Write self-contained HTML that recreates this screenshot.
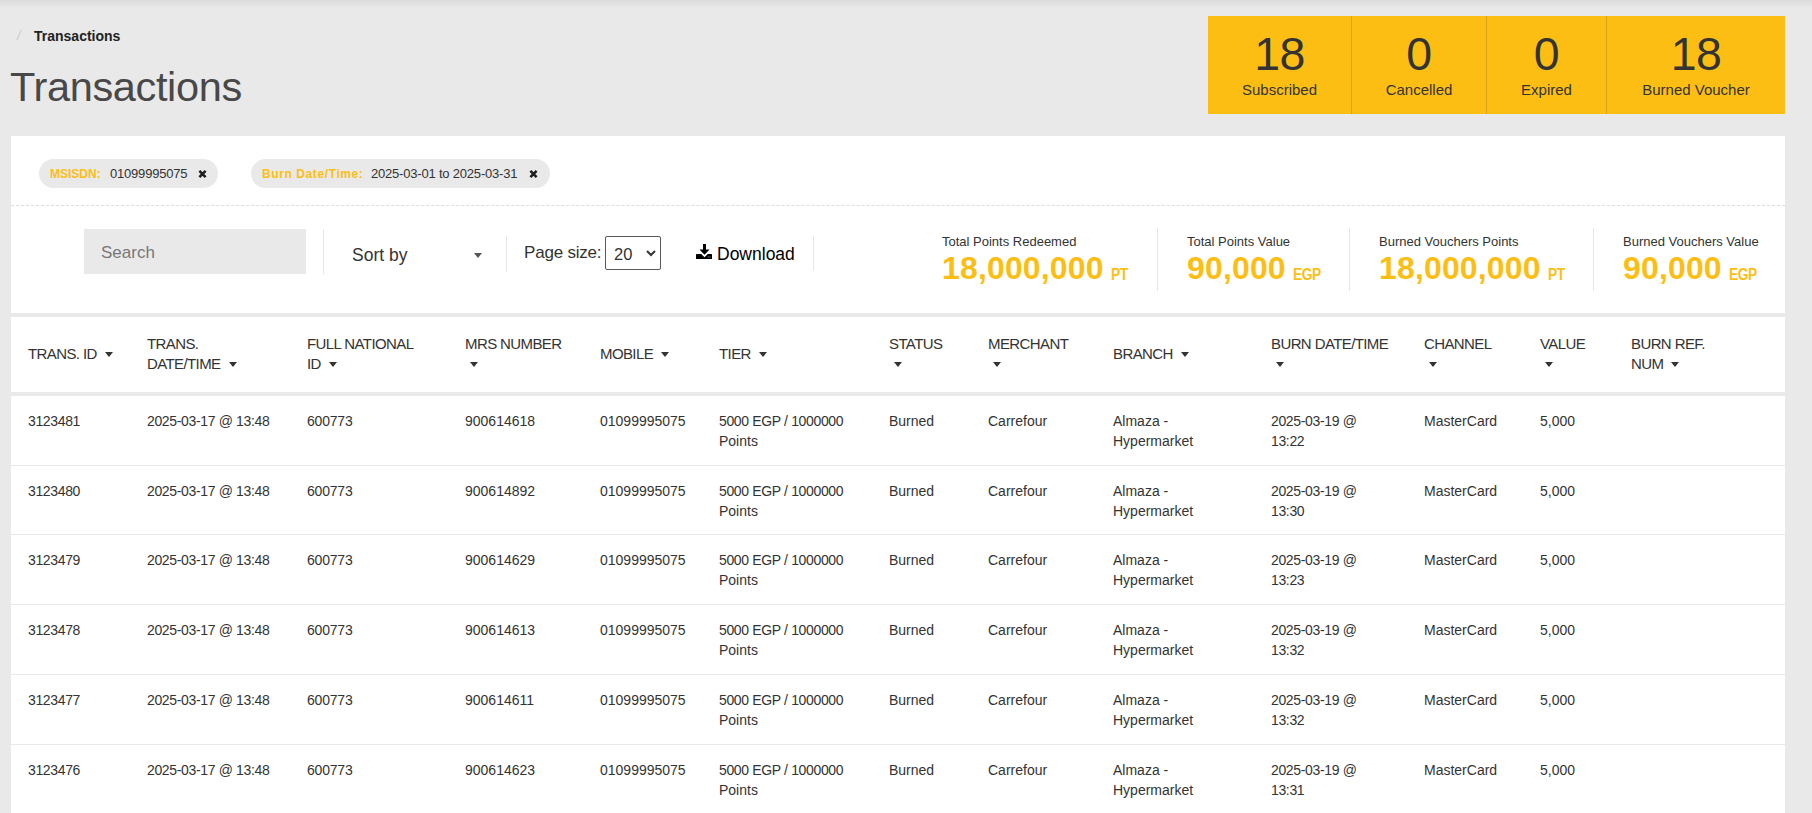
<!DOCTYPE html>
<html><head><meta charset="utf-8">
<style>
*{box-sizing:border-box;margin:0;padding:0}
html,body{width:1812px;height:813px;overflow:hidden;background:#e9e9e9;font-family:"Liberation Sans",sans-serif;color:#333;position:relative}
.abs{position:absolute;white-space:nowrap}
#shadow{position:absolute;left:0;top:0;width:1812px;height:8px;background:linear-gradient(#dbdbdb,#e9e9e9)}
.bc-sep{left:15px;top:27px;font-size:15px;color:#cfcfcf}
.bc{left:34px;top:27.5px;font-size:14px;font-weight:bold;color:#222}
h1{position:absolute;left:10px;top:62.5px;font-size:41.5px;letter-spacing:-0.35px;font-weight:normal;color:#484848;white-space:nowrap}
#stats{position:absolute;left:1208px;top:16px;width:577px;height:98px;background:#fdbe13}
#stats .c{position:absolute;top:0;height:98px;text-align:center;color:#333}
#stats .c .n{position:absolute;left:0;right:0;top:14.7px;font-size:46.5px;line-height:1;letter-spacing:-0.5px}
#stats .c .l{position:absolute;left:0;right:0;top:66px;font-size:15px;line-height:1}
#stats .d{position:absolute;top:0;width:1px;height:98px;background:#d9a514}
#panel{position:absolute;left:11px;top:136px;width:1774px;height:177px;background:#fff}
.chip{position:absolute;top:23px;height:29px;border-radius:15px;background:#e9e9e9}
.chip .k{position:absolute;top:8px;font-size:12px;font-weight:bold;color:#fdbe13;white-space:nowrap}
.chip .v{position:absolute;top:7px;font-size:13px;color:#333;white-space:nowrap}
.chip svg{position:absolute;top:11px}
#dash{position:absolute;left:0;top:69px;width:1774px;height:0;border-top:1px dashed #ddd}
#search{position:absolute;left:73px;top:93px;width:222px;height:45px;background:#e9e9e9}
#search span{position:absolute;left:17px;top:13.7px;font-size:17px;color:#777}
.vd{position:absolute;width:1px;background:#e6e6e6}
.tb{position:absolute;white-space:nowrap;font-size:17.5px;color:#333}
#sel{position:absolute;left:594px;top:100px;width:56px;height:34px;border:1px solid #5a5a5a;border-radius:2px}
.st{position:absolute;white-space:nowrap}
.st .lb{font-size:13px;color:#333;position:absolute;top:0;left:0;white-space:nowrap}
.st .vl{font-size:32px;font-weight:bold;color:#fdbe13;position:absolute;left:0;top:16px;letter-spacing:0.15px;white-space:nowrap}
.st .vl small{font-size:16px;margin-left:7px;letter-spacing:-0.5px;display:inline-block;transform:scaleX(0.86);transform-origin:0 0;position:relative;top:1px}
#thead{position:absolute;left:11px;top:317px;width:1774px;height:75px;background:#fff}
.row{position:absolute;left:11px;width:1774px;height:70px;background:#fff}
.hl{position:absolute;left:11px;width:1774px;height:1px;background:#e9e9e9}
.th{position:absolute;font-size:15px;letter-spacing:-0.6px;line-height:20px;color:#333;white-space:nowrap}
.td{position:absolute;top:15px;font-size:14px;line-height:20px;color:#333;white-space:nowrap}
.caret{display:inline-block;width:0;height:0;border-left:4.5px solid transparent;border-right:4.5px solid transparent;border-top:5px solid #333;vertical-align:middle;margin-left:8px;position:relative;top:-1px}
.caret.c0{margin-left:5px}
.ls{letter-spacing:-0.35px}
.ls2{letter-spacing:-0.2px}

</style></head><body>
<div id="shadow"></div>
<svg style="position:absolute;left:15px;top:29px" width="8" height="12" viewBox="0 0 8 12"><path d="M6.3 0.8L1.7 11.2" stroke="#d0d0d0" stroke-width="1.3"/></svg>
<div class="abs bc">Transactions</div>
<h1>Transactions</h1>

<div id="stats">
  <div class="c" style="left:0;width:143px"><div class="n">18</div><div class="l">Subscribed</div></div>
  <div class="d" style="left:143px"></div>
  <div class="c" style="left:144px;width:134px"><div class="n">0</div><div class="l">Cancelled</div></div>
  <div class="d" style="left:278px"></div>
  <div class="c" style="left:279px;width:119px"><div class="n">0</div><div class="l">Expired</div></div>
  <div class="d" style="left:398px"></div>
  <div class="c" style="left:399px;width:178px"><div class="n">18</div><div class="l">Burned Voucher</div></div>
</div>

<div id="panel">
  <div class="chip" style="left:28px;width:179px">
    <span class="k" style="left:11px">MSISDN:</span><span class="v" style="left:71px;letter-spacing:-0.2px">01099995075</span>
    <svg style="left:159px" width="9" height="8" viewBox="0 0 9 8"><path d="M1.4 0.9L7.6 7.1M7.6 0.9L1.4 7.1" stroke="#1e1e1e" stroke-width="2.6"/></svg>
  </div>
  <div class="chip" style="left:240px;width:299px">
    <span class="k" style="left:11px;letter-spacing:0.6px">Burn Date/Time:</span><span class="v" style="left:120px;letter-spacing:-0.2px">2025-03-01 to 2025-03-31</span>
    <svg style="left:278px" width="9" height="8" viewBox="0 0 9 8"><path d="M1.4 0.9L7.6 7.1M7.6 0.9L1.4 7.1" stroke="#1e1e1e" stroke-width="2.6"/></svg>
  </div>
  <div id="dash"></div>
  <div id="search"><span>Search</span></div>
  <div class="vd" style="left:312px;top:93px;height:45px"></div>
  <div class="tb" style="left:341px;top:108.8px">Sort by</div>
  <i class="caret" style="position:absolute;left:463px;top:117px;margin:0;border-top-color:#555;border-left-width:4px;border-right-width:4px"></i>
  <div class="vd" style="left:495px;top:100px;height:36px"></div>
  <div class="tb" style="left:513px;top:107px;font-size:17px;letter-spacing:-0.2px">Page size:</div>
  <div id="sel"><span style="position:absolute;left:8px;top:7.5px;font-size:16.5px;color:#333">20</span>
    <svg style="position:absolute;left:40px;top:13px" width="10" height="7" viewBox="0 0 10 7"><path d="M1 1L5 5L9 1" fill="none" stroke="#333" stroke-width="2"/></svg>
  </div>
  <svg style="position:absolute;left:685px;top:108px" width="16" height="15" viewBox="0 0 16 15"><path d="M7 0h3v5.5h3.5l-5 5.3l-5-5.3h3.5z" fill="#000"/><path d="M0.6 10h4.6l3.3 3.2l3.3-3.2h3.6a0.6 0.6 0 0 1 .6.6v3.8a0.6 0.6 0 0 1 -.6.6h-14.8a0.6 0.6 0 0 1 -.6-.6v-3.8a0.6 0.6 0 0 1 .6-.6z" fill="#000"/><circle cx="12.2" cy="12.9" r="0.55" fill="#888"/><circle cx="14" cy="12.9" r="0.55" fill="#888"/></svg>
  <div class="tb" style="left:706px;top:107.6px;color:#000">Download</div>
  <div class="vd" style="left:802px;top:100px;height:35px"></div>

  <div class="st" style="left:931px;top:98px"><span class="lb">Total Points Redeemed</span><span class="vl">18,000,000<small>PT</small></span></div>
  <div class="vd" style="left:1146px;top:92px;height:63px"></div>
  <div class="st" style="left:1176px;top:98px"><span class="lb">Total Points Value</span><span class="vl">90,000<small>EGP</small></span></div>
  <div class="vd" style="left:1338px;top:92px;height:63px"></div>
  <div class="st" style="left:1368px;top:98px"><span class="lb">Burned Vouchers Points</span><span class="vl">18,000,000<small>PT</small></span></div>
  <div class="vd" style="left:1582px;top:92px;height:63px"></div>
  <div class="st" style="left:1612px;top:98px"><span class="lb">Burned Vouchers Value</span><span class="vl">90,000<small>EGP</small></span></div>
</div>
<div id="thead">
<div class="th" style="left:17px;top:27px">TRANS. ID<i class="caret"></i></div>
<div class="th" style="left:136px;top:17px">TRANS.<br>DATE/TIME<i class="caret"></i></div>
<div class="th" style="left:296px;top:17px">FULL NATIONAL<br>ID<i class="caret"></i></div>
<div class="th" style="left:454px;top:17px">MRS NUMBER<br><i class="caret c0"></i></div>
<div class="th" style="left:589px;top:27px">MOBILE<i class="caret"></i></div>
<div class="th" style="left:708px;top:27px">TIER<i class="caret"></i></div>
<div class="th" style="left:878px;top:17px">STATUS<br><i class="caret c0"></i></div>
<div class="th" style="left:977px;top:17px">MERCHANT<br><i class="caret c0"></i></div>
<div class="th" style="left:1102px;top:27px">BRANCH<i class="caret"></i></div>
<div class="th" style="left:1260px;top:17px">BURN DATE/TIME<br><i class="caret c0"></i></div>
<div class="th" style="left:1413px;top:17px">CHANNEL<br><i class="caret c0"></i></div>
<div class="th" style="left:1529px;top:17px">VALUE<br><i class="caret c0"></i></div>
<div class="th" style="left:1620px;top:17px">BURN REF.<br>NUM<i class="caret"></i></div>
</div>
<div class="row" style="top:396px">
<div class="td" style="left:17px"><span class="ls">3123481</span></div>
<div class="td" style="left:136px"><span class="ls">2025-03-17 @ 13:48</span></div>
<div class="td" style="left:296px"><span class="ls2">600773</span></div>
<div class="td" style="left:454px">900614618</div>
<div class="td" style="left:589px">01099995075</div>
<div class="td" style="left:708px"><span class="ls">5000 EGP / 1000000</span><br>Points</div>
<div class="td" style="left:878px">Burned</div>
<div class="td" style="left:977px">Carrefour</div>
<div class="td" style="left:1102px">Almaza -<br>Hypermarket</div>
<div class="td" style="left:1260px"><span class="ls">2025-03-19 @<br>13:22</span></div>
<div class="td" style="left:1413px">MasterCard</div>
<div class="td" style="left:1529px">5,000</div>
</div>
<div class="row" style="top:466px">
<div class="td" style="left:17px"><span class="ls">3123480</span></div>
<div class="td" style="left:136px"><span class="ls">2025-03-17 @ 13:48</span></div>
<div class="td" style="left:296px"><span class="ls2">600773</span></div>
<div class="td" style="left:454px">900614892</div>
<div class="td" style="left:589px">01099995075</div>
<div class="td" style="left:708px"><span class="ls">5000 EGP / 1000000</span><br>Points</div>
<div class="td" style="left:878px">Burned</div>
<div class="td" style="left:977px">Carrefour</div>
<div class="td" style="left:1102px">Almaza -<br>Hypermarket</div>
<div class="td" style="left:1260px"><span class="ls">2025-03-19 @<br>13:30</span></div>
<div class="td" style="left:1413px">MasterCard</div>
<div class="td" style="left:1529px">5,000</div>
</div>
<div class="row" style="top:535px">
<div class="td" style="left:17px"><span class="ls">3123479</span></div>
<div class="td" style="left:136px"><span class="ls">2025-03-17 @ 13:48</span></div>
<div class="td" style="left:296px"><span class="ls2">600773</span></div>
<div class="td" style="left:454px">900614629</div>
<div class="td" style="left:589px">01099995075</div>
<div class="td" style="left:708px"><span class="ls">5000 EGP / 1000000</span><br>Points</div>
<div class="td" style="left:878px">Burned</div>
<div class="td" style="left:977px">Carrefour</div>
<div class="td" style="left:1102px">Almaza -<br>Hypermarket</div>
<div class="td" style="left:1260px"><span class="ls">2025-03-19 @<br>13:23</span></div>
<div class="td" style="left:1413px">MasterCard</div>
<div class="td" style="left:1529px">5,000</div>
</div>
<div class="row" style="top:605px">
<div class="td" style="left:17px"><span class="ls">3123478</span></div>
<div class="td" style="left:136px"><span class="ls">2025-03-17 @ 13:48</span></div>
<div class="td" style="left:296px"><span class="ls2">600773</span></div>
<div class="td" style="left:454px">900614613</div>
<div class="td" style="left:589px">01099995075</div>
<div class="td" style="left:708px"><span class="ls">5000 EGP / 1000000</span><br>Points</div>
<div class="td" style="left:878px">Burned</div>
<div class="td" style="left:977px">Carrefour</div>
<div class="td" style="left:1102px">Almaza -<br>Hypermarket</div>
<div class="td" style="left:1260px"><span class="ls">2025-03-19 @<br>13:32</span></div>
<div class="td" style="left:1413px">MasterCard</div>
<div class="td" style="left:1529px">5,000</div>
</div>
<div class="row" style="top:675px">
<div class="td" style="left:17px"><span class="ls">3123477</span></div>
<div class="td" style="left:136px"><span class="ls">2025-03-17 @ 13:48</span></div>
<div class="td" style="left:296px"><span class="ls2">600773</span></div>
<div class="td" style="left:454px">900614611</div>
<div class="td" style="left:589px">01099995075</div>
<div class="td" style="left:708px"><span class="ls">5000 EGP / 1000000</span><br>Points</div>
<div class="td" style="left:878px">Burned</div>
<div class="td" style="left:977px">Carrefour</div>
<div class="td" style="left:1102px">Almaza -<br>Hypermarket</div>
<div class="td" style="left:1260px"><span class="ls">2025-03-19 @<br>13:32</span></div>
<div class="td" style="left:1413px">MasterCard</div>
<div class="td" style="left:1529px">5,000</div>
</div>
<div class="row" style="top:745px">
<div class="td" style="left:17px"><span class="ls">3123476</span></div>
<div class="td" style="left:136px"><span class="ls">2025-03-17 @ 13:48</span></div>
<div class="td" style="left:296px"><span class="ls2">600773</span></div>
<div class="td" style="left:454px">900614623</div>
<div class="td" style="left:589px">01099995075</div>
<div class="td" style="left:708px"><span class="ls">5000 EGP / 1000000</span><br>Points</div>
<div class="td" style="left:878px">Burned</div>
<div class="td" style="left:977px">Carrefour</div>
<div class="td" style="left:1102px">Almaza -<br>Hypermarket</div>
<div class="td" style="left:1260px"><span class="ls">2025-03-19 @<br>13:31</span></div>
<div class="td" style="left:1413px">MasterCard</div>
<div class="td" style="left:1529px">5,000</div>
</div>
<div class="hl" style="top:465px"></div>
<div class="hl" style="top:534px"></div>
<div class="hl" style="top:604px"></div>
<div class="hl" style="top:674px"></div>
<div class="hl" style="top:744px"></div>

</body></html>
